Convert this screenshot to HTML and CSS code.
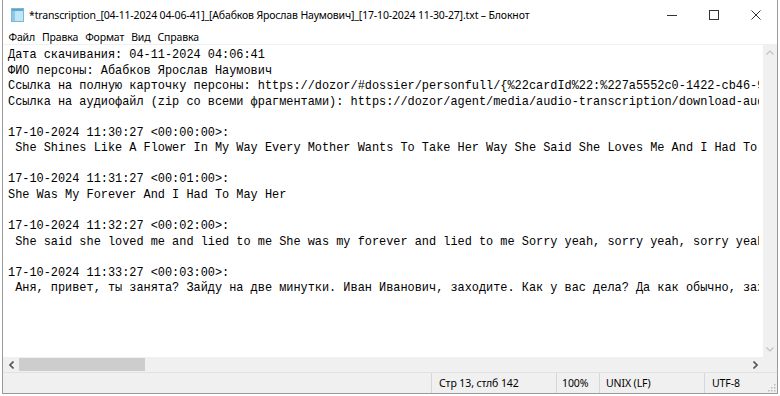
FILE: index.html
```html
<!DOCTYPE html>
<html lang="ru">
  <head>
    <meta charset="UTF-8" />
    <title>Блокнот</title>
    <link rel="stylesheet" href="styles.css">
  </head>
  <body>
    <div class="window">
      <header class="titlebar">
        <svg class="app-icon" width="13" height="14" viewBox="0 0 13 14">
          <rect x="0.5" y="0.5" width="12" height="13" fill="#bfe6f7" stroke="#7fb6d3" />
          <rect x="1" y="1" width="3" height="12" fill="#8cc8e6" />
          <rect x="1" y="1" width="11" height="2" fill="#5aa7d2" />
        </svg>
        <span class="title">*transcription_[04-11-2024 04-06-41]_[Абабков Ярослав Наумович]_[17-10-2024 11-30-27].txt – Блокнот</span>
        <div class="caption">
          <span class="cap-btn">
            <svg width="10" height="10" viewBox="0 0 10 10"><line x1="0" y1="5.5" x2="10" y2="5.5" stroke="#333" /></svg>
          </span>
          <span class="cap-btn">
            <svg width="10" height="10" viewBox="0 0 10 10"><rect x="0.5" y="0.5" width="9" height="9" fill="none" stroke="#333" /></svg>
          </span>
          <span class="cap-btn">
            <svg width="10" height="10" viewBox="0 0 10 10"><path d="M0.5 0.5 L9.5 9.5 M9.5 0.5 L0.5 9.5" stroke="#333" /></svg>
          </span>
        </div>
      </header>

      <nav class="menubar">
        <span>Файл</span>
        <span>Правка</span>
        <span>Формат</span>
        <span>Вид</span>
        <span>Справка</span>
      </nav>

      <div class="editor">
        <pre class="text">Дата скачивания: 04-11-2024 04:06:41
ФИО персоны: Абабков Ярослав Наумович
Ссылка на полную карточку персоны: https://dozor/#dossier/personfull/{%22cardId%22:%227a5552c0-1422-cb46-9e3d-1f0a2b7c4d11%22}
Ссылка на аудиофайл (zip со всеми фрагментами): https://dozor/agent/media/audio-transcription/download-audio

17-10-2024 11:30:27 &lt;00:00:00&gt;:
 She Shines Like A Flower In My Way Every Mother Wants To Take Her Way She Said She Loves Me And I Had To Go

17-10-2024 11:31:27 &lt;00:01:00&gt;:
She Was My Forever And I Had To May Her

17-10-2024 11:32:27 &lt;00:02:00&gt;:
 She said she loved me and lied to me She was my forever and lied to me Sorry yeah, sorry yeah, sorry yeah

17-10-2024 11:33:27 &lt;00:03:00&gt;:
 Аня, привет, ты занята? Зайду на две минутки. Иван Иванович, заходите. Как у вас дела? Да как обычно, заходите</pre>
        <div class="vscroll">
          <span class="sbtn">
            <svg width="8" height="5" viewBox="0 0 8 5"><polyline points="0.5,4.5 4,1 7.5,4.5" fill="none" stroke="#c2c2c2" stroke-width="1.2" /></svg>
          </span>
          <span class="sbtn">
            <svg width="8" height="5" viewBox="0 0 8 5"><polyline points="0.5,0.5 4,4 7.5,0.5" fill="none" stroke="#c2c2c2" stroke-width="1.2" /></svg>
          </span>
        </div>
      </div>

      <div class="hscroll">
        <span class="hbtn">
          <svg width="5" height="8" viewBox="0 0 5 8"><polyline points="4.5,0.5 1,4 4.5,7.5" fill="none" stroke="#555" stroke-width="1.6" /></svg>
        </span>
        <span class="track"><span class="thumb"></span></span>
        <span class="hbtn">
          <svg width="5" height="8" viewBox="0 0 5 8"><polyline points="0.5,0.5 4,4 0.5,7.5" fill="none" stroke="#555" stroke-width="1.6" /></svg>
        </span>
        <span class="corner"></span>
      </div>

      <footer class="statusbar">
        <span class="spacer"></span>
        <span class="cell pos">Стр 13, стлб 142</span>
        <span class="cell zoom">100%</span>
        <span class="cell eol">UNIX (LF)</span>
        <span class="cell enc">UTF-8</span>
        <svg class="grip" width="8" height="8" viewBox="0 0 8 8">
          <rect x="6" y="0" width="1.5" height="1.5" fill="#bbb" />
          <rect x="3" y="3" width="1.5" height="1.5" fill="#bbb" />
          <rect x="6" y="3" width="1.5" height="1.5" fill="#bbb" />
          <rect x="0" y="6" width="1.5" height="1.5" fill="#bbb" />
          <rect x="3" y="6" width="1.5" height="1.5" fill="#bbb" />
          <rect x="6" y="6" width="1.5" height="1.5" fill="#bbb" />
        </svg>
      </footer>
    </div>
  </body>
</html>
```

FILE: styles.css
```css
body {
  margin: 0;
  background-color: #ffffff;
  font-family: "Noto Sans", "Open Sans", sans-serif;
  color: #000;
}

.window {
  margin-left: 2px;
  width: 774px;
  border: 1px solid #9a9a9a;
  border-top: none;
  display: flex;
  flex-direction: column;
  background-color: #fff;
}

/* title bar */
.titlebar {
  height: 30px;
  display: flex;
  align-items: center;
  background-color: #fff;
}

.app-icon {
  margin-left: 8px;
  margin-right: 5px;
  flex-shrink: 0;
}

.title {
  font-size: 10.5px;
  letter-spacing: -0.15px;
  white-space: nowrap;
  flex: 1;
  overflow: hidden;
}

.caption {
  display: flex;
  align-self: stretch;
}

.cap-btn {
  width: 42px;
  display: flex;
  align-items: center;
  justify-content: center;
}

/* menu */
.menubar {
  height: 14px;
  display: flex;
  align-items: center;
  padding-left: 2px;
  font-size: 10.5px;
  letter-spacing: -0.15px;
  border-bottom: 1px solid #f0f0f0;
}

.menubar span {
  padding: 0 3.5px;
  line-height: 14px;
}

/* text area */
.editor {
  height: 312px;
  display: flex;
  background-color: #fff;
}

.text {
  flex: 1;
  margin: 0 4px 0 0;
  padding: 3px 0 0 5px;
  overflow: hidden;
  white-space: pre;
  font-family: "Liberation Mono", "DejaVu Sans Mono", monospace;
  font-size: 11.9px;
  line-height: 15.55px;
  color: #000;
}

.vscroll {
  width: 14px;
  background-color: #f0f0f0;
  display: flex;
  flex-direction: column;
  justify-content: space-between;
}

.sbtn {
  height: 15px;
  display: flex;
  align-items: center;
  justify-content: center;
}

.hscroll {
  height: 15px;
  display: flex;
  background-color: #f0f0f0;
}

.hbtn {
  width: 16px;
  display: flex;
  align-items: center;
  justify-content: center;
}

.track {
  flex: 1;
  padding: 1px 0;
  display: flex;
}

.thumb {
  width: 126px;
  background-color: #cdcdcd;
}

.corner {
  width: 14px;
}

/* status bar */
.statusbar {
  height: 20px;
  display: flex;
  align-items: center;
  background-color: #f0f0f0;
  border-top: 1px solid #e2e2e2;
  font-size: 10.5px;
  letter-spacing: -0.1px;
  position: relative;
}

.spacer {
  width: 428px;
}

.cell {
  height: 20px;
  line-height: 20px;
  padding-left: 7px;
  border-left: 1px solid #d7d7d7;
  white-space: nowrap;
}

.pos {
  width: 117px;
}

.zoom {
  width: 37px;
  padding-left: 5px;
}

.eol {
  width: 98px;
  padding-left: 6px;
}

.enc {
  flex: 1;
}

.grip {
  position: absolute;
  right: 1px;
  bottom: 1px;
}
```
